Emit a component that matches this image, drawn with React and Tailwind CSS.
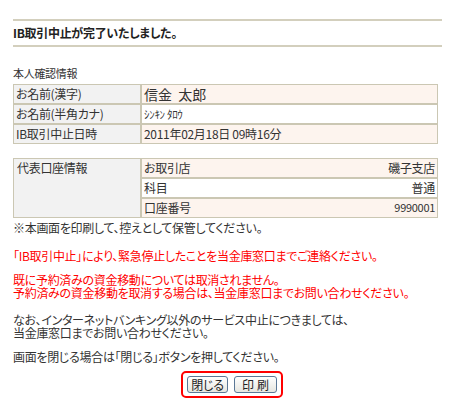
import React from "react";

const font = { fontFamily: '"MS UI Gothic", "Noto Sans CJK JP", sans-serif' };

const Row = ({ label, value, pink, big }) => (
  <tr>
    <td className="w-[128px] h-[20px] border border-[#cbc7b3] bg-[#f2f2f2] px-[2px] leading-[16px]">{label}</td>
    <td className={`border border-[#cbc7b3] px-[2px] leading-[16px] ${pink ? "bg-[#fdf4ee]" : "bg-white"} ${big ? "text-[14px]" : ""}`}>{value}</td>
  </tr>
);

export default function App() {
  return (
    <div className="w-[467px] h-[405px] bg-white text-[#333] text-[12px] [font-feature-settings:'palt'] tracking-[-0.3px]" style={font}>
      <div className="pt-[19px] px-[13px] w-[455px]">
        <div className="border-t-2 border-b-2 border-[#d3cfbd] h-[28px] flex items-center font-bold text-[12px] text-[#222]">
          IB取引中止が完了いたしました。
        </div>
      </div>

      <div className="pl-[13px] w-[438px]">
        <div className="mt-[19px] leading-[14px] text-[11px]">本人確認情報</div>
        <table className="mt-[4px] w-full border-separate border-spacing-0">
          <tbody>
            <Row label="お名前(漢字)" value={<span className="tracking-[0px]">信金&nbsp;&nbsp;太郎</span>} pink big />
            <Row label="お名前(半角カナ)" value={<span className="text-[11px]">ｼﾝｷﾝ ﾀﾛｳ</span>} />
            <Row label="IB取引中止日時" value="2011年02月18日 09時16分" pink />
          </tbody>
        </table>

        <table className="mt-[14px] w-full border-separate border-spacing-0">
          <tbody>
            <tr>
              <td rowSpan={3} className="w-[128px] align-top border border-[#cbc7b3] bg-[#f2f2f2] px-[3px] pt-[1px] leading-[16px]">代表口座情報</td>
              <td className="h-[20px] border border-[#cbc7b3] bg-[#fdf4ee] px-[2px]">
                <div className="flex justify-between"><span>お取引店</span><span>磯子支店</span></div>
              </td>
            </tr>
            <tr>
              <td className="h-[20px] border border-[#cbc7b3] bg-white px-[2px]">
                <div className="flex justify-between"><span>科目</span><span>普通</span></div>
              </td>
            </tr>
            <tr>
              <td className="h-[20px] border border-[#cbc7b3] bg-[#fdf4ee] px-[2px]">
                <div className="flex justify-between"><span>口座番号</span><span className="text-[11px]">9990001</span></div>
              </td>
            </tr>
          </tbody>
        </table>

        <p className="leading-[13px] mt-[3px]">※本画面を印刷して、控えとして保管してください。</p>

        <div className="text-[#ff0000] leading-[13px]">
          <p className="mt-[15px]">「IB取引中止」により、緊急停止したことを当金庫窓口までご連絡ください。</p>
          <p className="mt-[11px]">既に予約済みの資金移動については取消されません。</p>
          <p>予約済みの資金移動を取消する場合は、当金庫窓口までお問い合わせください。</p>
        </div>

        <div className="leading-[13px]">
          <p className="mt-[14px]">なお、インターネットバンキング以外のサービス中止につきましては、</p>
          <p>当金庫窓口までお問い合わせください。</p>
          <p className="mt-[11px]">画面を閉じる場合は「閉じる」ボタンを押してください。</p>
        </div>
      </div>

      <div className="flex justify-center w-[467px] mt-[8px]">
        <div className="ml-[-3px] border-2 border-[#ff0000] rounded-[5px] px-[4px] py-[3px] flex gap-[6px]">
          <button className="h-[17px] w-[41px] border border-[#5b7897] rounded-[3px] bg-gradient-to-b from-white to-[#e6e6e0] text-[12px] leading-[13px] text-[#222]">閉じる</button>
          <button className="h-[17px] w-[43px] border border-[#5b7897] rounded-[3px] bg-gradient-to-b from-white to-[#e6e6e0] text-[12px] leading-[13px] text-[#222] tracking-[3px] pl-[3px]">印刷</button>
        </div>
      </div>
    </div>
  );
}
